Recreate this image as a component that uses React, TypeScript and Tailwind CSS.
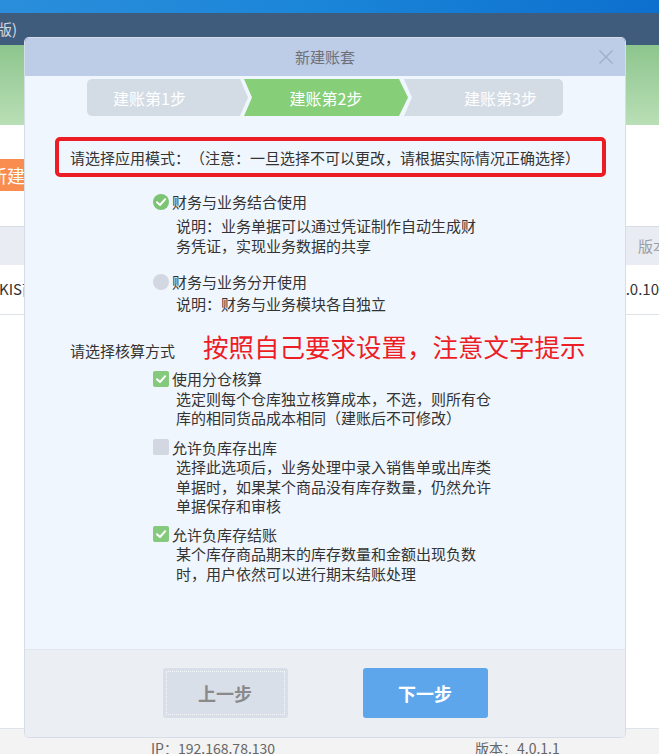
import type { ReactNode } from 'react'

function CheckMark() {
  return (
    <svg width="16" height="16" viewBox="0 0 16 16" className="absolute inset-0">
      <path d="M4 8.2 L7 11 L12.2 5.2" fill="none" stroke="#fff" strokeWidth="2" strokeLinecap="round" strokeLinejoin="round" />
    </svg>
  )
}

function RadioIcon({ on }: { on: boolean }) {
  return (
    <span className={`relative block w-[16px] h-[16px] rounded-full shrink-0 ${on ? 'bg-[#7cc474]' : 'bg-[#d2d7e2]'}`}>
      {on && <CheckMark />}
    </span>
  )
}

function BoxIcon({ on }: { on: boolean }) {
  return (
    <span className={`relative block w-[16px] h-[16px] rounded-[2px] shrink-0 ${on ? 'bg-[#84c97c]' : 'bg-[#d2d7e2]'}`}>
      {on && <CheckMark />}
    </span>
  )
}

function Option({ icon, title, lines, lead, gap }: { icon: ReactNode; title: string; lines: string[]; lead: string; gap: string }) {
  return (
    <div>
      <div className={`flex items-center gap-[3px] ${lead}`}>
        {icon}
        <span>{title}</span>
      </div>
      <div className={`ml-[23px] ${gap} ${lead}`}>
        {lines.map((l) => (
          <div key={l} className="whitespace-nowrap">
            {l}
          </div>
        ))}
      </div>
    </div>
  )
}

export default function App() {
  return (
    <div className="relative w-[659px] h-[754px] overflow-hidden flex flex-col bg-white font-['Noto_Sans_CJK_SC',sans-serif] [text-spacing-trim:space-all]">
      {/* app behind the dialog */}
      <div className="h-[13px] bg-linear-to-r from-[#2a8edb] via-[#1a85d8] to-[#0d6fce]" />
      <div className="h-[32px] bg-[#3f5c7c] text-[#cfd7e0] text-[15px] leading-[32px] -ml-[3px]">版)</div>
      <div className="h-[80px] bg-linear-to-b from-[#8dc58e] to-[#b9dfb6]" />
      <div className="h-[101px] pt-[34px]">
        <div className="h-[32px] w-[80px] -ml-[12px] pl-[1px] bg-[#f98c4f] text-white text-[18px] leading-[32px]">新建账套</div>
      </div>
      <div className="h-[39px] bg-[#e9ecf2] border-t border-[#d9dde5] flex items-center pl-[638px] text-[15px] text-[#9a9ea6] whitespace-nowrap">
        版本
      </div>
      <div className="h-[50px] border-b border-[#dde1e8] flex items-center text-[15px] text-[#333] whitespace-nowrap">
        <span className="w-[625px] -ml-[1px]">KIS商贸</span>
        <span>1.0.10</span>
      </div>
      <div className="flex-1" />
      <div className="h-[26px] bg-[#f3f3f3] border-t border-[#dfe3ea] pt-[9px] flex text-[14px] leading-[20px] text-[#666] whitespace-nowrap">
        <span className="ml-[151px] w-[324px]">IP：192.168.78.130</span>
        <span>版本：4.0.1.1</span>
      </div>

      {/* dialog */}
      <div className="absolute left-[25px] top-[38px] w-[600px] h-[699px] flex flex-col rounded-[4px] overflow-hidden shadow-[0_0_0_1px_#d5dde8]">
        <div className="relative h-[38px] bg-[#bdcce7] flex items-center justify-center text-[15px] text-[#6d717a]">
          新建账套
          <svg width="16" height="16" viewBox="0 0 16 16" className="absolute right-[11px] top-[11px]">
            <path d="M1.5 1.5 L14.5 14.5 M14.5 1.5 L1.5 14.5" stroke="#a0aec6" strokeWidth="1.4" />
          </svg>
        </div>

        <div className="flex-1 bg-[#f0f6fd] text-[15px] text-[#333]">
          <div className="mt-[3px] ml-[62px] flex h-[37px] text-white text-[16px]">
            <div className="w-[161px] h-full bg-[#d3dce5] rounded-l-[5px] flex items-center pl-[26px] [clip-path:polygon(0_0,153px_0,161px_50%,153px_100%,0_100%)]">
              建账第1步
            </div>
            <div className="w-[164px] h-full -ml-[4px] bg-[#86cf78] flex items-center justify-center [clip-path:polygon(0_0,155px_0,164px_50%,155px_100%,0_100%,8px_50%)]">
              建账第2步
            </div>
            <div className="w-[159px] h-full -ml-[4px] bg-[#d3dce5] rounded-r-[5px] flex items-center justify-end pr-[26px] [clip-path:polygon(0_0,100%_0,100%_100%,0_100%,8px_50%)]">
              建账第3步
            </div>
          </div>

          <div className="mt-[21px] ml-[30px] w-[551px] h-[40px] border-[4px] border-[#ec1c24] rounded-[5px] pl-[11px] pt-[2px] flex items-center whitespace-nowrap">
            请选择应用模式：（注意：一旦选择不可以更改，请根据实际情况正确选择）
          </div>

          <div className="ml-[128px] mt-[15px]">
            <Option
              icon={<RadioIcon on />}
              title="财务与业务结合使用"
              lines={['说明：业务单据可以通过凭证制作自动生成财', '务凭证，实现业务数据的共享']}
              lead="leading-[20px]"
              gap="mt-[4px]"
            />
            <div className="mt-[16px]">
              <Option
                icon={<RadioIcon on={false} />}
                title="财务与业务分开使用"
                lines={['说明：财务与业务模块各自独立']}
                lead="leading-[20px]"
                gap="mt-[2px]"
              />
            </div>
          </div>

          <div className="ml-[45px] mt-[17px] whitespace-nowrap leading-[30px]">
            <span>请选择核算方式</span>
            <span className="ml-[28px] text-[25.5px] text-[#ee1d25]">按照自己要求设置，注意文字提示</span>
          </div>

          <div className="ml-[128px] mt-[3px]">
            <Option
              icon={<BoxIcon on />}
              title="使用分仓核算"
              lines={['选定则每个仓库独立核算成本，不选，则所有仓', '库的相同货品成本相同（建账后不可修改）']}
              lead="leading-[19.5px]"
              gap=""
            />
            <div className="mt-[10px]">
              <Option
                icon={<BoxIcon on={false} />}
                title="允许负库存出库"
                lines={['选择此选项后，业务处理中录入销售单或出库类', '单据时，如果某个商品没有库存数量，仍然允许', '单据保存和审核']}
                lead="leading-[19.5px]"
                gap=""
              />
            </div>
            <div className="mt-[9px]">
              <Option
                icon={<BoxIcon on />}
                title="允许负库存结账"
                lines={['某个库存商品期末的库存数量和金额出现负数', '时，用户依然可以进行期末结账处理']}
                lead="leading-[19.5px]"
                gap=""
              />
            </div>
          </div>
        </div>

        <div className="h-[88px] bg-[#ebeef3] border-t border-[#e2e7ee] flex justify-center gap-[75px] pt-[18px]">
          <button className="w-[125px] h-[50px] rounded-[3px] bg-[#d9dfe9] text-[#8a8a8a] text-[18px] font-bold outline-dotted outline-1 -outline-offset-4 outline-[#f4f6f9]">
            上一步
          </button>
          <button className="w-[125px] h-[50px] rounded-[3px] bg-[#5ea6ec] text-white text-[18px] font-bold">
            下一步
          </button>
        </div>
      </div>
    </div>
  )
}
